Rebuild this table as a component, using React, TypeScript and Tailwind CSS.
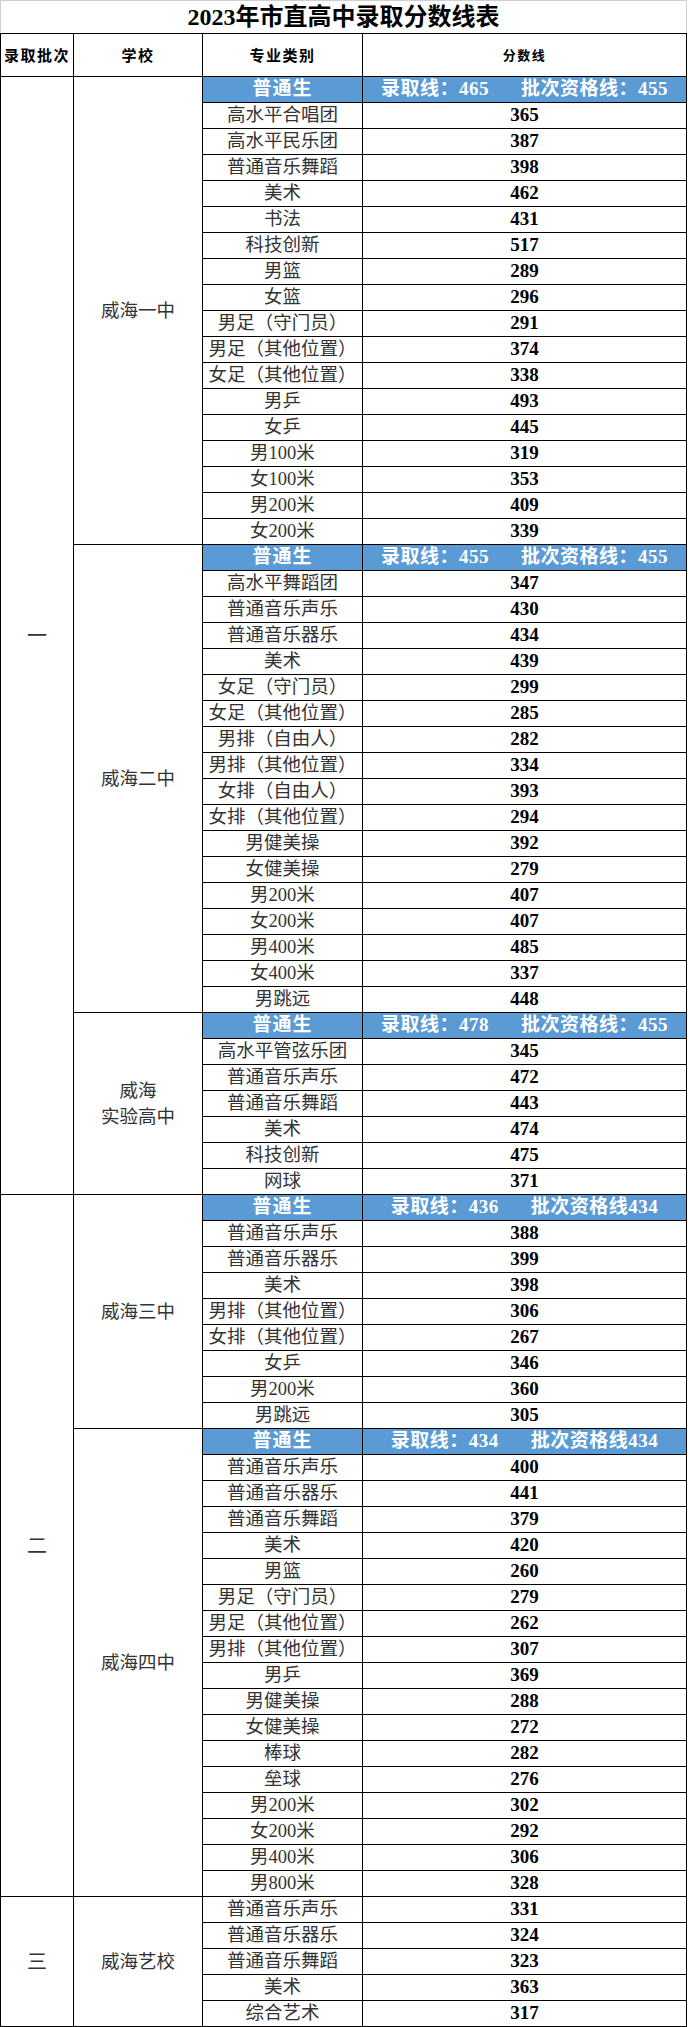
import React from "react";

type Row = [string, string];
type Group = {
  school: string[];
  head?: [string, string];
  rows: Row[];
};
type Batch = { label: string; groups: Group[] };

const batches: Batch[] = [
  {
    label: "一",
    groups: [
      {
        school: ["威海一中"],
        head: ["录取线：465", "批次资格线：455"],
        rows: [
          ["高水平合唱团", "365"],
          ["高水平民乐团", "387"],
          ["普通音乐舞蹈", "398"],
          ["美术", "462"],
          ["书法", "431"],
          ["科技创新", "517"],
          ["男篮", "289"],
          ["女篮", "296"],
          ["男足（守门员）", "291"],
          ["男足（其他位置）", "374"],
          ["女足（其他位置）", "338"],
          ["男乒", "493"],
          ["女乒", "445"],
          ["男100米", "319"],
          ["女100米", "353"],
          ["男200米", "409"],
          ["女200米", "339"],
        ],
      },
      {
        school: ["威海二中"],
        head: ["录取线：455", "批次资格线：455"],
        rows: [
          ["高水平舞蹈团", "347"],
          ["普通音乐声乐", "430"],
          ["普通音乐器乐", "434"],
          ["美术", "439"],
          ["女足（守门员）", "299"],
          ["女足（其他位置）", "285"],
          ["男排（自由人）", "282"],
          ["男排（其他位置）", "334"],
          ["女排（自由人）", "393"],
          ["女排（其他位置）", "294"],
          ["男健美操", "392"],
          ["女健美操", "279"],
          ["男200米", "407"],
          ["女200米", "407"],
          ["男400米", "485"],
          ["女400米", "337"],
          ["男跳远", "448"],
        ],
      },
      {
        school: ["威海", "实验高中"],
        head: ["录取线：478", "批次资格线：455"],
        rows: [
          ["高水平管弦乐团", "345"],
          ["普通音乐声乐", "472"],
          ["普通音乐舞蹈", "443"],
          ["美术", "474"],
          ["科技创新", "475"],
          ["网球", "371"],
        ],
      },
    ],
  },
  {
    label: "二",
    groups: [
      {
        school: ["威海三中"],
        head: ["录取线：436", "批次资格线434"],
        rows: [
          ["普通音乐声乐", "388"],
          ["普通音乐器乐", "399"],
          ["美术", "398"],
          ["男排（其他位置）", "306"],
          ["女排（其他位置）", "267"],
          ["女乒", "346"],
          ["男200米", "360"],
          ["男跳远", "305"],
        ],
      },
      {
        school: ["威海四中"],
        head: ["录取线：434", "批次资格线434"],
        rows: [
          ["普通音乐声乐", "400"],
          ["普通音乐器乐", "441"],
          ["普通音乐舞蹈", "379"],
          ["美术", "420"],
          ["男篮", "260"],
          ["男足（守门员）", "279"],
          ["男足（其他位置）", "262"],
          ["男排（其他位置）", "307"],
          ["男乒", "369"],
          ["男健美操", "288"],
          ["女健美操", "272"],
          ["棒球", "282"],
          ["垒球", "276"],
          ["男200米", "302"],
          ["女200米", "292"],
          ["男400米", "306"],
          ["男800米", "328"],
        ],
      },
    ],
  },
  {
    label: "三",
    groups: [
      {
        school: ["威海艺校"],
        rows: [
          ["普通音乐声乐", "331"],
          ["普通音乐器乐", "324"],
          ["普通音乐舞蹈", "323"],
          ["美术", "363"],
          ["综合艺术", "317"],
        ],
      },
    ],
  },
];

const serif = "font-['Liberation_Serif','Noto_Sans_CJK_SC',serif]";
const sans = "font-['Noto_Sans_CJK_SC','Liberation_Sans',sans-serif]";

export default function App() {
  return (
    <div className="w-[688px] bg-white text-black">
      <div
        className={`h-[33px] w-[687px] border-t border-l border-r border-[#cfcfcf] flex items-center justify-center ${serif} font-bold text-[24px] leading-none`}
      >
        2023年市直高中录取分数线表
      </div>
      <div className="w-fit bg-black p-px flex flex-col gap-px">
        <div className={`flex gap-px h-[42px] ${sans} font-bold`}>
          <div className="w-[72px] bg-white flex items-center justify-center text-[15px] tracking-[1.5px]">
            录取批次
          </div>
          <div className="w-[128px] bg-white flex items-center justify-center text-[15px] tracking-[1.5px]">
            学校
          </div>
          <div className="w-[159px] bg-white flex items-center justify-center text-[15px] tracking-[1.5px]">
            专业类别
          </div>
          <div className="w-[323px] bg-white flex items-center justify-center text-[13px] tracking-[1.5px]">
            分数线
          </div>
        </div>
        {batches.map((b) => (
          <div key={b.label} className="flex gap-px">
            <div
              className={`w-[72px] bg-white flex items-center justify-center ${serif} text-[20px] text-[#333]`}
            >
              {b.label}
            </div>
            <div className="flex flex-col gap-px">
              {b.groups.map((g) => (
                <div key={g.school.join("")} className="flex gap-px">
                  <div
                    className={`w-[128px] bg-white flex flex-col items-center justify-center ${serif} text-[18.5px] leading-[26px] text-[#333]`}
                  >
                    {g.school.map((s) => (
                      <span key={s}>{s}</span>
                    ))}
                  </div>
                  <div className="flex flex-col gap-px">
                    {g.head && (
                      <div
                        className={`flex gap-px h-[25px] ${serif} font-bold text-white`}
                      >
                        <div className="w-[159px] bg-[#5b9bd5] flex items-center justify-center text-[19px] tracking-[1px]">
                          普通生
                        </div>
                        <div className="w-[323px] bg-[#5b9bd5] flex items-center justify-center gap-[32px] text-[19px] tracking-[0.5px]">
                          <span>{g.head[0]}</span>
                          <span>{g.head[1]}</span>
                        </div>
                      </div>
                    )}
                    {g.rows.map((r, i) => (
                      <div key={i} className="flex gap-px h-[25px]">
                        <div
                          className={`w-[159px] bg-white flex items-center justify-center ${serif} text-[18.5px] text-[#333] whitespace-nowrap`}
                        >
                          {r[0]}
                        </div>
                        <div
                          className={`w-[323px] bg-white flex items-center justify-center ${serif} font-bold text-[19px]`}
                        >
                          {r[1]}
                        </div>
                      </div>
                    ))}
                  </div>
                </div>
              ))}
            </div>
          </div>
        ))}
      </div>
    </div>
  );
}
